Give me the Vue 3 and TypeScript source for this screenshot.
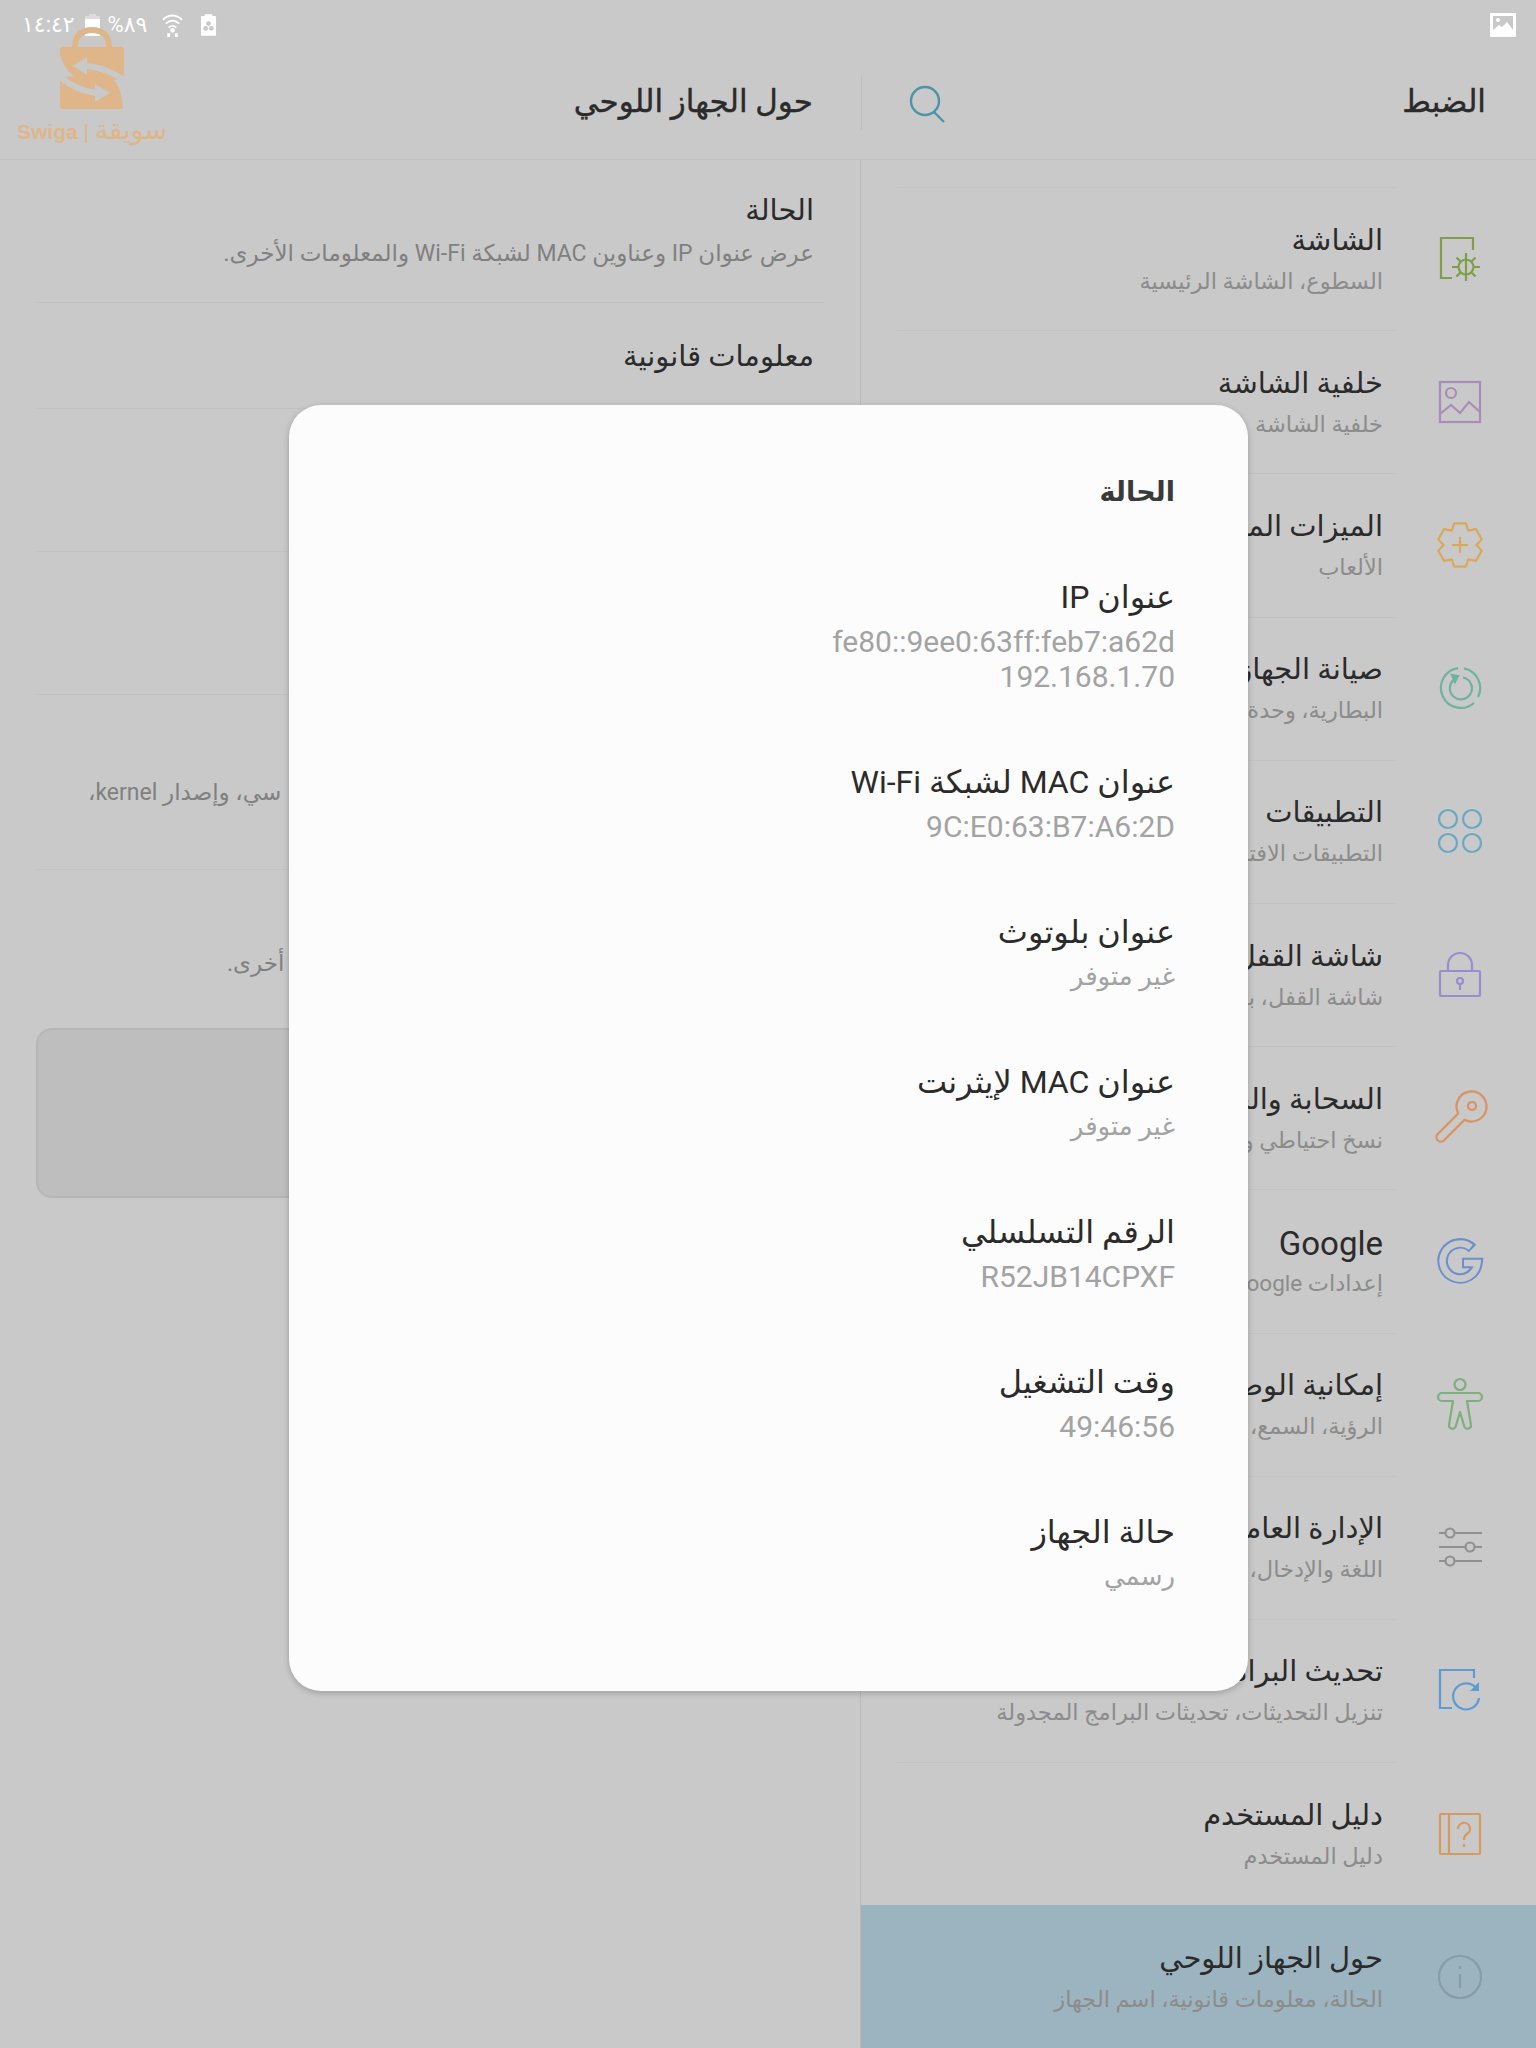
<script setup lang="ts">
type MenuIcon =
  | 'display' | 'wallpaper' | 'advanced' | 'care' | 'apps' | 'lock' | 'cloud'
  | 'google' | 'access' | 'general' | 'update' | 'guide' | 'about'

const menu: Array<{ icon: MenuIcon; title: string; sub: string; active?: boolean }> = [
  { icon: 'display', title: 'الشاشة', sub: 'السطوع، الشاشة الرئيسية' },
  { icon: 'wallpaper', title: 'خلفية الشاشة', sub: 'خلفية الشاشة' },
  { icon: 'advanced', title: 'الميزات المتقدمة', sub: 'الألعاب' },
  { icon: 'care', title: 'صيانة الجهاز', sub: 'البطارية، وحدة التخزين، الذاكرة' },
  { icon: 'apps', title: 'التطبيقات', sub: 'التطبيقات الافتراضية، أذونات التطبيق' },
  { icon: 'lock', title: 'شاشة القفل', sub: 'شاشة القفل، بصمة الإصبع' },
  { icon: 'cloud', title: 'السحابة والحسابات', sub: 'نسخ احتياطي واستعادة' },
  { icon: 'google', title: 'Google', sub: 'إعدادات Google' },
  { icon: 'access', title: 'إمكانية الوصول', sub: 'الرؤية، السمع، المهارة' },
  { icon: 'general', title: 'الإدارة العامة', sub: 'اللغة والإدخال، التاريخ والوقت' },
  { icon: 'update', title: 'تحديث البرامج', sub: 'تنزيل التحديثات، تحديثات البرامج المجدولة' },
  { icon: 'guide', title: 'دليل المستخدم', sub: 'دليل المستخدم' },
  { icon: 'about', title: 'حول الجهاز اللوحي', sub: 'الحالة، معلومات قانونية، اسم الجهاز', active: true },
]

const statusRows: Array<{ label: string; values: string[]; arabic?: boolean }> = [
  { label: 'عنوان IP', values: ['fe80::9ee0:63ff:feb7:a62d', '192.168.1.70'] },
  { label: 'عنوان MAC لشبكة Wi-Fi', values: ['9C:E0:63:B7:A6:2D'] },
  { label: 'عنوان بلوتوث', values: ['غير متوفر'], arabic: true },
  { label: 'عنوان MAC لإيثرنت', values: ['غير متوفر'], arabic: true },
  { label: 'الرقم التسلسلي', values: ['R52JB14CPXF'] },
  { label: 'وقت التشغيل', values: ['49:46:56'] },
  { label: 'حالة الجهاز', values: ['رسمي'], arabic: true },
]

// six flat teeth for the advanced features cog
function cogPath(): string {
  const pt = (deg: number, r: number) => {
    const a = (deg * Math.PI) / 180
    return `${(22 + r * Math.cos(a)).toFixed(1)} ${(22 + r * Math.sin(a)).toFixed(1)}`
  }
  let d = `M${pt(-120, 16.5)}`
  for (let i = 0; i < 6; i++) {
    const c = -90 + i * 60
    d += ` L${pt(c - 15, 22.5)} L${pt(c + 15, 22.5)} L${pt(c + 30, 16.5)}`
  }
  return d + 'Z'
}
</script>

<template>
  <div class="screen" dir="rtl">
    <div class="status-bar" dir="ltr">
      <span class="status-text">١٤:٤٢</span>
      <svg class="st-battery" viewBox="0 0 17 24" aria-hidden="true">
        <path d="M5 1h7v2h4v20H1V3h4z" fill="#fff" opacity=".35" />
        <rect x="1" y="6" width="15" height="17" fill="#fff" />
      </svg>
      <span class="status-text">%٨٩</span>
      <svg class="st-wifi" viewBox="0 0 22 26" fill="none" stroke="#fff" stroke-width="2" aria-hidden="true">
        <path d="M1 7c6-6 14-6 20 0M4 11c4.500-4 9.500-4 14 0M7 15c2.500-2 5.500-2 8 0" />
        <circle cx="11" cy="18" r="1.500" fill="#fff" />
        <path d="M7 21v4M15 21v4" stroke-width="3" />
      </svg>
      <svg class="st-sim" viewBox="0 0 18 25" aria-hidden="true">
        <path d="M5 1h8v2h3a1 1 0 0 1 1 1v19a1 1 0 0 1-1 1H2a1 1 0 0 1-1-1V4a1 1 0 0 1 1-1h3z" fill="#fff" />
        <circle cx="9" cy="11" r="2.500" fill="#c9c9c9" />
        <circle cx="6" cy="16" r="2.500" fill="#c9c9c9" />
        <circle cx="12" cy="16" r="2.500" fill="#c9c9c9" />
      </svg>
      <span class="status-spacer"></span>
      <svg class="st-photo" viewBox="0 0 26 24" aria-hidden="true">
        <rect width="26" height="24" rx="1" fill="#fff" />
        <rect x="3" y="3" width="20" height="14" fill="#c9c9c9" />
        <circle cx="8" cy="7" r="2" fill="#fff" />
        <path d="M3 17l6-5 3 2 5-5 6 8z" fill="#fff" />
      </svg>
    </div>

    <header class="top-bar">
      <div class="top-main">
        <h1 class="top-title">الضبط</h1>
        <svg class="search-icon" viewBox="0 0 36 38" fill="none" aria-hidden="true">
          <circle cx="16" cy="16" r="14" />
          <path d="M25 27l10 10" />
        </svg>
      </div>
      <div class="top-detail">
        <h2 class="top-title detail-title">حول الجهاز اللوحي</h2>
      </div>
    </header>

    <div class="panes">
      <nav class="menu-pane">
        <div
          v-for="item in menu"
          :key="item.icon"
          class="menu-row"
          :class="{ active: item.active }"
        >
          <span class="menu-icon" :class="`icon-${item.icon}`">
            <svg viewBox="0 0 44 44" fill="none" aria-hidden="true">
              <template v-if="item.icon === 'display'">
                <path d="M35 13V1H3v40h11" />
                <circle cx="28" cy="30" r="7.500" />
                <path d="M28 16v28M14 30h6M36 30h6M18.500 20.500l4 4M33.500 35.500l4 4M37.500 20.500l-4 4M22.500 35.500l-4 4" />
              </template>
              <template v-else-if="item.icon === 'wallpaper'">
                <rect x="2" y="2" width="40" height="40" />
                <circle cx="13" cy="13" r="5" />
                <path d="M2 34l11-9 9 8 9-11 11 10" />
              </template>
              <template v-else-if="item.icon === 'advanced'">
                <path :d="cogPath()" stroke-linejoin="round" />
                <path d="M22 14v16M14 22h16" />
              </template>
              <template v-else-if="item.icon === 'care'">
                <path d="M26 2.400A20 20 0 0 1 40 31" />
                <path d="M36 37A20 20 0 1 1 20 2.100" />
                <path d="M17 13A11 11 0 1 0 25 11.500" />
                <path d="M14 9l6 1-3 6z" fill="currentColor" />
              </template>
              <template v-else-if="item.icon === 'apps'">
                <circle cx="10" cy="10" r="9" />
                <circle cx="34" cy="10" r="9" />
                <circle cx="10" cy="34" r="9" />
                <circle cx="34" cy="34" r="9" />
              </template>
              <template v-else-if="item.icon === 'lock'">
                <rect x="2" y="18" width="40" height="25" rx="1" />
                <path d="M10 18v-6a12 12 0 0 1 24 0v6" />
                <circle cx="22" cy="28" r="3" />
                <path d="M22 31v6" />
              </template>
              <template v-else-if="item.icon === 'cloud'">
                <g transform="rotate(-45 22 22)">
                  <path d="M24 17.500H-5a4.500 4.500 0 0 0 0 9H24a15 15 0 1 0 0-9z" stroke-linejoin="round" />
                  <circle cx="39" cy="22" r="4" />
                </g>
              </template>
              <template v-else-if="item.icon === 'google'">
                <path class="g-outer" d="M34.500 9.500A17.500 17.500 0 1 0 39.500 24H24" />
                <path class="g-inner" d="M32.800 8.200A17.500 17.500 0 1 0 39.500 24H26" />
              </template>
              <template v-else-if="item.icon === 'access'">
                <circle cx="22" cy="2.500" r="5.500" />
                <path d="M4 11H40a4 4 0 0 1 0 8H29L33 43a3.500 3.500 0 0 1-6.500 2L22 30 17.500 45a3.500 3.500 0 0 1-6.500-2L15 19H4a4 4 0 0 1 0-8z" stroke-linejoin="round" />
              </template>
              <template v-else-if="item.icon === 'general'">
                <path d="M1 8h43M1 22h43M1 36h43" />
                <circle cx="12" cy="8" r="4.500" class="slider-knob" />
                <circle cx="32" cy="22" r="4.500" class="slider-knob" />
                <circle cx="12" cy="36" r="4.500" class="slider-knob" />
              </template>
              <template v-else-if="item.icon === 'update'">
                <path d="M36 10V2H2v38h12" />
                <path d="M38 20A13 13 0 1 0 41 30" />
                <path d="M41 14v9h-9z" fill="currentColor" stroke="none" />
              </template>
              <template v-else-if="item.icon === 'guide'">
                <rect x="2" y="2" width="40" height="40" rx="1" />
                <path d="M11 2v40" />
                <path d="M20 17a6 6 0 1 1 9 5c-2.500 1.500-3 3-3 6M26 32v3" />
              </template>
              <template v-else>
                <circle cx="22" cy="22" r="21" />
                <path d="M22 19v14M22 11v3" />
              </template>
            </svg>
          </span>
          <div class="menu-text">
            <div class="row-title" :class="{ 'title-latin': item.icon === 'google' }">{{ item.title }}</div>
            <div class="row-sub menu-sub">{{ item.sub }}</div>
          </div>
        </div>
      </nav>

      <section class="detail-pane">
        <div class="detail-row row-status">
          <div class="row-title">الحالة</div>
          <div class="row-sub detail-sub">عرض عنوان IP وعناوين MAC لشبكة Wi-Fi والمعلومات الأخرى.</div>
        </div>
        <div class="detail-row row-legal">
          <div class="row-title">معلومات قانونية</div>
        </div>
        <div class="detail-row row-plain"></div>
        <div class="detail-row row-plain"></div>
        <div class="detail-row row-software">
          <div class="row-sub detail-sub tail-one">سي، وإصدار kernel،</div>
        </div>
        <div class="detail-row row-battery">
          <div class="row-sub detail-sub tail-two">أخرى.</div>
        </div>
        <div class="detail-box"></div>
      </section>
    </div>

    <!-- watermark sits over the status bar in the source shot -->
    <div class="watermark">
      <svg class="bag" viewBox="0 0 64 84" aria-hidden="true">
        <path d="M15 20C15 8 22 3 32 3s17 5 17 17" fill="none" stroke="#deb68a" stroke-width="6" />
        <rect y="20" width="64" height="62" rx="3" fill="#deb68a" />
        <g fill="#c9c9c9">
          <path d="M-1 20C0 32 5 43 14 49L-1 51z" />
          <path d="M65 52L54 53C60 60 62 70 63 82h2z" />
          <path d="M13 39 27 30V48z" />
          <path d="M50 66 35 57V75z" />
        </g>
        <g fill="none" stroke="#c9c9c9" stroke-width="6">
          <path d="M26 39Q48 41 65 54" />
          <path d="M36 66Q14 63 -1 49" />
        </g>
      </svg>
      <div class="mark-text" dir="ltr"><b>Swiga</b> | <span class="mark-ar">سويقة</span></div>
    </div>

    <div class="dialog">
      <h3 class="dialog-title">الحالة</h3>
      <div class="dialog-list">
        <div v-for="row in statusRows" :key="row.label" class="dialog-row">
          <div class="dialog-label">{{ row.label }}</div>
          <div
            v-for="value in row.values"
            :key="value"
            class="dialog-value"
            :class="{ 'value-arabic': row.arabic }"
          >
            {{ value }}
          </div>
        </div>
      </div>
    </div>
  </div>
</template>

<style scoped>
.screen {
  position: relative;
  width: 1536px;
  height: 2048px;
  overflow: hidden;
  background: #c9c9c9;
  color: #2b2b2b;
  font-family: Roboto, "DejaVu Sans", sans-serif;
}

.status-bar {
  height: 50px;
  display: flex;
  align-items: center;
  padding: 0 20px 0 22px;
  box-sizing: border-box;
}

.status-text {
  color: #fff;
  font-size: 22px;
  line-height: 50px;
}

.st-battery {
  width: 17px;
  height: 24px;
  margin: 0 7px 0 9px;
}

.st-wifi {
  width: 21px;
  height: 25px;
  margin-left: 15px;
}

.st-sim {
  width: 17px;
  height: 24px;
  margin-left: 17px;
}

.status-spacer {
  flex: 1;
}

.st-photo {
  width: 26px;
  height: 24px;
}

.top-bar {
  height: 110px;
  display: flex;
  box-sizing: border-box;
  border-bottom: 1px solid #c2c2c2;
}

.top-main {
  width: 676px;
  box-sizing: border-box;
  padding: 0 50px 0 49px;
  display: flex;
  align-items: center;
  justify-content: space-between;
}

.top-title {
  margin: 0;
  margin-top: -5px;
  font-size: 31px;
  font-weight: 500;
  line-height: 44px;
  color: #2b2b2b;
  -webkit-text-stroke: 0.4px #2b2b2b;
}

.search-icon {
  width: 36px;
  height: 38px;
  margin-top: -2px;
  stroke: #4b95a9;
  stroke-width: 2.400;
}

.top-detail {
  flex: 1;
  position: relative;
  display: flex;
  align-items: center;
  padding-right: 47px;
}

.top-detail::before {
  content: "";
  position: absolute;
  right: -2px;
  top: 26px;
  height: 54px;
  border-right: 1px solid #bdbdbd;
}

.panes {
  display: flex;
  height: 1888px;
}

.menu-pane {
  width: 675px;
  flex-shrink: 0;
  padding-top: 27px;
  box-sizing: border-box;
}

.menu-row {
  height: 143.200px;
  display: flex;
  align-items: center;
  padding-right: 46px;
  box-sizing: border-box;
}

.menu-row.active {
  background: #9cb4bf;
}

.menu-icon {
  width: 60px;
  height: 44px;
  flex-shrink: 0;
  display: flex;
  justify-content: center;
  margin-left: 35px;
}

.menu-icon svg {
  width: 44px;
  height: 44px;
  overflow: visible;
  stroke: currentColor;
  stroke-width: 2.200;
}

.icon-display { color: #7e9e48; }
.icon-wallpaper { color: #a98cb8; }
.icon-advanced { color: #d8a95a; }
.icon-care { color: #6db39f; }
.icon-apps { color: #6aa8c4; }
.icon-lock { color: #9a8dcf; }
.icon-cloud { color: #dc9160; }
.icon-google { color: #6b8fcf; }
.icon-access { color: #7fae7f; }
.icon-general { color: #909090; }
.icon-update { color: #5c9bd6; }
.icon-guide { color: #d89a5c; }
.icon-about { color: #869ca6; }

.icon-google .g-outer {
  stroke-width: 10.500;
}

.icon-google .g-inner {
  stroke: #c9c9c9;
  stroke-width: 6.500;
}

.slider-knob {
  fill: #c9c9c9;
}

.menu-text {
  width: 498px;
  height: 100%;
  box-sizing: border-box;
  padding-right: 12px;
  border-top: 1px solid #c2c2c2;
  display: flex;
  flex-direction: column;
  justify-content: center;
  white-space: nowrap;
}

.menu-row.active .menu-text {
  border-top-color: transparent;
}

.row-title {
  font-size: 29px;
  line-height: 42px;
  color: #2b2b2b;
}

.title-latin {
  font-size: 33px;
  padding-top: 2px;
  margin-bottom: -2px;
}

.row-sub {
  font-size: 23px;
  line-height: 38px;
  color: #8c8c8c;
}

.menu-sub {
  font-size: 22.500px;
  margin-top: 1px;
}

.detail-pane {
  flex: 1;
  border-right: 1px solid #b9b9b9;
  padding: 0 35px 0 36px;
  min-width: 0;
}

.detail-row {
  padding-right: 11px;
  border-bottom: 1px solid #c2c2c2;
  box-sizing: border-box;
  display: flex;
  flex-direction: column;
  justify-content: center;
  white-space: nowrap;
}

.detail-sub {
  font-size: 23px;
  color: #808080;
}

.row-status { height: 143px; }
.row-status .detail-sub { margin-top: 4px; }
.row-legal { height: 106px; }
.row-plain { height: 143px; }
.row-software { height: 175px; }
.row-battery {
  height: 158px;
  border-bottom: 0;
}

.tail-one {
  text-align: left;
  padding-left: 52px;
  margin-top: 21px;
}

.tail-two {
  text-align: left;
  padding-left: 191px;
  margin-top: 30px;
}

.detail-box {
  height: 170px;
  box-sizing: border-box;
  border: 2px solid #b6b6b6;
  border-radius: 16px;
  background: #bebebe;
}

.watermark {
  position: absolute;
  left: 17px;
  top: 27px;
  width: 150px;
  display: flex;
  flex-direction: column;
  align-items: center;
}

.bag {
  width: 64px;
  height: 84px;
  overflow: hidden;
}

.mark-text {
  margin-top: 5px;
  font-family: "Liberation Sans", "DejaVu Sans", sans-serif;
  font-size: 21px;
  line-height: 28px;
  color: #deb68a;
  white-space: nowrap;
}

.mark-ar {
  font-size: 27px;
}

.dialog {
  position: absolute;
  left: 289px;
  top: 405px;
  width: 959px;
  height: 1286px;
  box-sizing: border-box;
  padding: 65px 73px 0;
  border-radius: 32px;
  background: #fcfcfc;
  box-shadow: 0 2px 6px rgba(0, 0, 0, 0.22);
}

.dialog-title {
  margin: 0 0 61px;
  font-size: 27px;
  font-weight: 700;
  line-height: 44px;
  color: #3a3a3a;
}

.dialog-list {
  display: flex;
  flex-direction: column;
  gap: 66px;
}

.dialog-label {
  font-size: 32px;
  line-height: 44px;
  margin-bottom: 5px;
  color: #2b2b2b;
}

.dialog-value {
  font-size: 30px;
  line-height: 35px;
  color: #a3a3a3;
}

.value-arabic {
  font-size: 26px;
}
</style>
